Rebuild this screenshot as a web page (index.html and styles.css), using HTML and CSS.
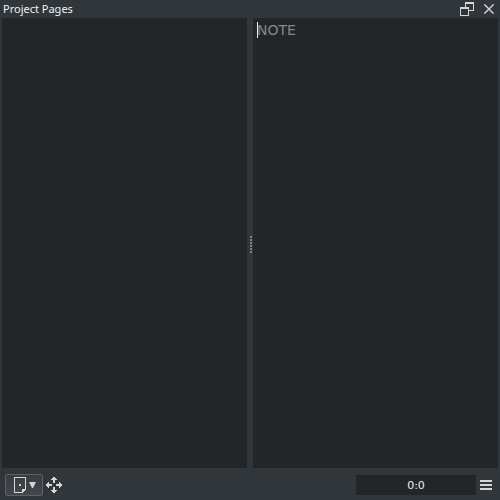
FILE: index.html
```html
<!DOCTYPE html>
<html lang="en">
<head>
<meta charset="utf-8">
<title>Project Pages</title>
<link rel="stylesheet" href="styles.css">
</head>
<body>
<header class="titlebar">
  <h1 class="title">Project Pages</h1>
  <button class="icon-button" type="button" aria-label="Float window">
    <svg width="14" height="14" viewBox="0 0 14 14" shape-rendering="crispEdges"><path d="M5 0h9v9H9V8h4V2H6v3H5zM0 5h9v9H0zM1 7v6h7V7z" fill-rule="evenodd"/></svg>
  </button>
  <button class="icon-button" type="button" aria-label="Close">
    <svg width="10" height="10" viewBox="0 0 10 10"><path class="stroke" d="M.4.4l9.2 9.2M9.6.4L.4 9.6"/></svg>
  </button>
</header>
<main class="panes">
  <section class="pane" aria-label="Pages"></section>
  <div class="splitter" role="separator" aria-orientation="vertical"><i></i><i></i><i></i><i></i><i></i><i></i></div>
  <div class="pane note-pane">
    <textarea class="note" aria-label="Note" placeholder="NOTE"></textarea>
    <span class="caret"></span>
  </div>
</main>
<footer class="toolbar">
  <button class="page-button" type="button" aria-label="Page menu">
    <svg width="12" height="16" viewBox="0 0 12 16" shape-rendering="crispEdges"><path d="M0 0h12v13h-1V1H1v14h7v1H0zM5 7h2v2H5zM8 12h4v1h-1v1h-1v1H9v1H8z"/></svg>
    <svg width="7" height="6" viewBox="0 0 7 6"><path d="M0 0h7L4 6H3z"/></svg>
  </button>
  <button class="icon-button" type="button" aria-label="Move">
    <svg width="16" height="16" viewBox="0 0 16 16" shape-rendering="crispEdges"><path d="M7 0h2v1h1v1h1v1H9v3H7V3H5V2h1V1h1zM7 16h2v-1h1v-1h1v-1H9v-3H7v3H5v1h1v1h1zM0 7v2h1v1h1v1h1V9h3V7H3V5H2v1H1v1zM16 7v2h-1v1h-1v1h-1V9h-3V7h3V5h1v1h1v1z"/></svg>
  </button>
  <input class="position" type="text" aria-label="Position" value="0:0">
  <button class="icon-button" type="button" aria-label="Menu">
    <svg width="12" height="10" viewBox="0 0 12 10" shape-rendering="crispEdges"><path d="M0 0h12v2H0zM0 4h12v2H0zM0 8h12v2H0z"/></svg>
  </button>
</footer>
</body>
</html>
```
FILE: styles.css
```css
* { box-sizing: border-box; }

body {
  margin: 0;
  height: 100vh;
  display: flex;
  flex-direction: column;
  background: #31363b;
  color: #eff0f1;
  font-family: "Noto Sans", sans-serif;
  font-size: 11px;
}

button, input, textarea {
  margin: 0;
  padding: 0;
  border: 0;
  color: inherit;
  font: inherit;
}

svg { display: block; fill: #d4d5d7; }

.stroke { fill: none; stroke: #d4d5d7; stroke-width: 1.4; }

.titlebar {
  display: flex;
  align-items: center;
  height: 18px;
  padding: 0 6px 0 3px;
  gap: 10px;
}

.title {
  flex: 1;
  margin: 0;
  font-size: 11px;
  font-weight: 400;
  line-height: 18px;
}

.icon-button { background: none; }

.panes {
  flex: 1;
  display: flex;
  min-height: 0;
  padding: 0 2px;
}

.pane { flex: 1; background: #232629; }

.splitter {
  width: 6px;
  display: flex;
  flex-direction: column;
  align-items: center;
  justify-content: center;
  gap: 1px;
  padding-top: 2px;
}

.splitter i {
  width: 2px;
  height: 2px;
  margin-left: 1px;
  background: #7f8386;
}

.note-pane { position: relative; display: flex; }

.note {
  flex: 1;
  min-width: 0;
  padding: 4px;
  background: transparent;
  font-family: "DejaVu Sans", sans-serif;
  font-size: 14px;
  line-height: 16px;
  resize: none;
  outline: 0;
}

.note::placeholder { color: #85878a; opacity: 1; }

.caret {
  position: absolute;
  left: 4px;
  top: 4px;
  width: 1px;
  height: 16px;
  background: #eff0f1;
}

.toolbar {
  display: flex;
  align-items: center;
  height: 32px;
  padding: 2px 8px 0 5px;
  gap: 4px;
}

.page-button {
  display: flex;
  align-items: center;
  justify-content: center;
  gap: 3px;
  width: 38px;
  height: 22px;
  padding-left: 1px;
  border: 1px solid #5c6165;
  border-radius: 2px;
  background: linear-gradient(#383d42, #43474b);
}

.toolbar .icon-button { margin-left: -1px; }

.position {
  width: 120px;
  height: 20px;
  margin-left: auto;
  margin-right: 1px;
  background: #232629;
  font-family: "DejaVu Sans", sans-serif;
  text-align: center;
}
```
